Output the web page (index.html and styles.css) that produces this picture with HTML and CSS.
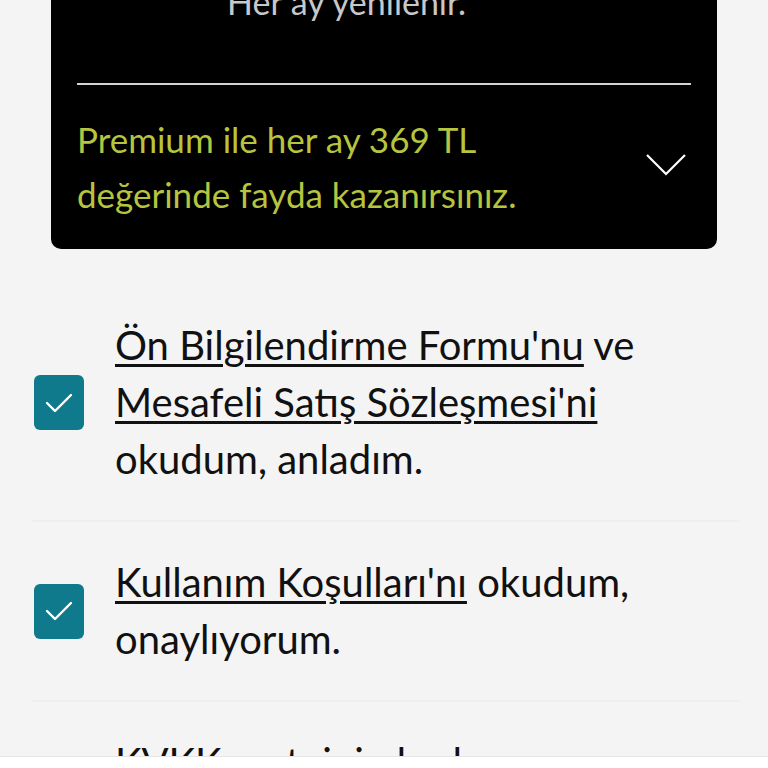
FILE: index.html
```html
<!DOCTYPE html>
<html lang="tr">
<head>
<meta charset="utf-8">
<link rel="stylesheet" href="styles.css">
</head>
<body>
<div class="page">
  <section class="card">
    <p class="renew">Her ay yenilenir.</p>
    <hr class="divider">
    <div class="benefit">
      <p class="benefit-text">Premium ile her ay 369 TL<br>değerinde fayda kazanırsınız.</p>
      <svg class="chevron" width="42" height="24" viewBox="0 0 42 24"><path d="M2 2 L21 21 L40 2" fill="none" stroke="#fff" stroke-width="2.2"/></svg>
    </div>
  </section>

  <ul class="consents">
    <li class="consent">
      <span class="check"><svg width="30" height="22" viewBox="0 0 30 22"><path d="M3 11 L11 19 L27 3" fill="none" stroke="#fff" stroke-width="2.4" stroke-linecap="round" stroke-linejoin="round"/></svg></span>
      <p class="consent-text"><a class="link">Ön Bilgilendirme Formu'nu</a> ve<br><a class="link">Mesafeli Satış Sözleşmesi'ni</a><br>okudum, anladım.</p>
    </li>
    <li class="consent">
      <span class="check"><svg width="30" height="22" viewBox="0 0 30 22"><path d="M3 11 L11 19 L27 3" fill="none" stroke="#fff" stroke-width="2.4" stroke-linecap="round" stroke-linejoin="round"/></svg></span>
      <p class="consent-text"><a class="link">Kullanım Koşulları'nı</a> okudum,<br>onaylıyorum.</p>
    </li>
    <li class="consent">
      <span class="check"></span>
      <p class="consent-text">KVKK metnini okudum ve<br>onaylıyorum.</p>
    </li>
  </ul>
</div>
<div class="footer"></div>
</body>
</html>
```
FILE: styles.css
```css
html, body {
  margin: 0;
  padding: 0;
  background: #f4f4f4;
  height: 768px;
  overflow: hidden;
  font-family: Lato, "Open Sans", sans-serif;
}
p { margin: 0; }
.page {
  display: flex;
  flex-direction: column;
}
.card {
  margin: -18px 51px 0;
  background: #000;
  border-radius: 0 0 10px 10px;
  padding: 0 26px 27px;
}
.renew {
  color: #c8c8c8;
  font-size: 34px;
  line-height: 40px;
  padding-left: 150px;
}
.divider {
  border: none;
  height: 2px;
  background: #d4d4d4;
  margin: 61px 0 0;
}
.benefit {
  display: flex;
  align-items: center;
  justify-content: space-between;
  padding-top: 27px;
}
.benefit-text {
  color: #b6c43e;
  font-size: 35px;
  line-height: 55px;
}
.chevron {
  margin-right: 4px;
  margin-top: -4px;
}
.consents {
  list-style: none;
  margin: 36px 0 0;
  padding: 0;
}
.consent {
  display: flex;
  align-items: center;
  gap: 31px;
  padding: 32px 0 32px 2px;
  margin: 0 28px 0 32px;
  border-bottom: 2px solid #efefef;
}
.check {
  flex: none;
  width: 50px;
  height: 55px;
  border-radius: 6px;
  background: #0e7a8c;
  display: flex;
  align-items: center;
  justify-content: center;
}
.consent-text {
  font-size: 40px;
  line-height: 57px;
  color: #111;
}
.link {
  text-decoration: underline;
  text-decoration-thickness: 3px;
  text-underline-offset: 4px;
}
.footer {
  position: fixed;
  left: 0;
  right: 0;
  bottom: 0;
  height: 11px;
  background: #fff;
  border-top: 1px solid #e6e6e6;
}
```
